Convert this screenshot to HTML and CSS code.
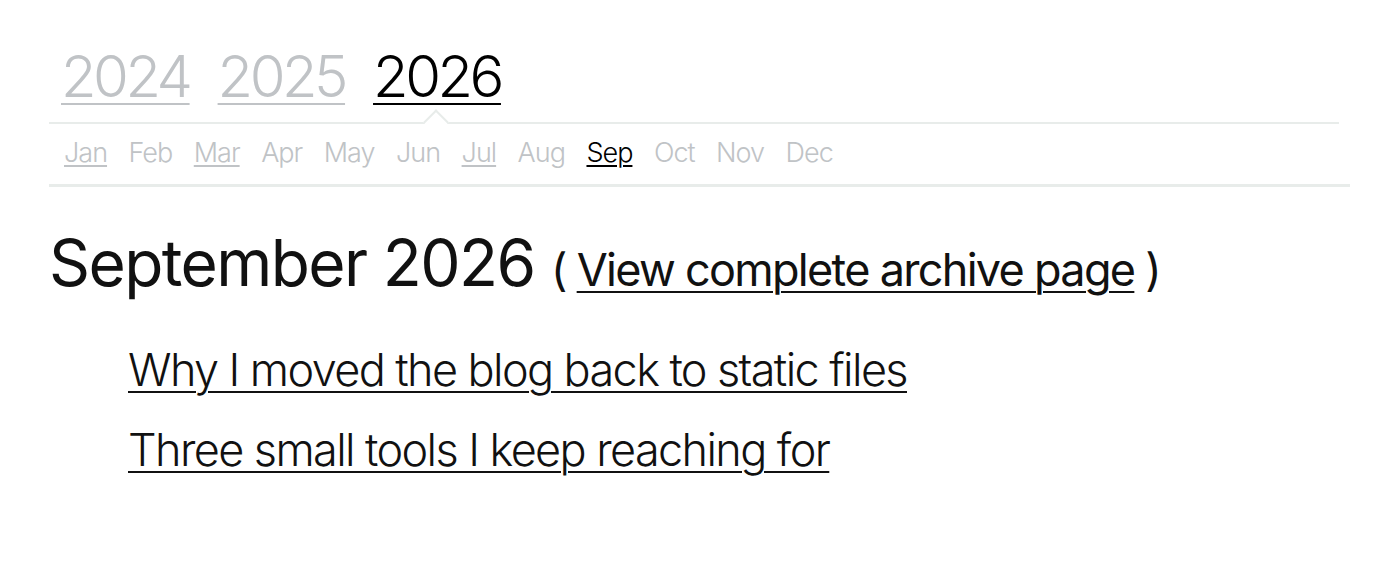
FILE: index.html
```html
<!DOCTYPE html>
<html lang="en">
<head>
<meta charset="utf-8">
<title>Archive</title>
<link rel="stylesheet" href="styles.css">
</head>
<body>
<div class="page">
  <nav class="archive-nav">
    <div class="years">
      <a class="year" href="#">2024</a>
      <a class="year" href="#">2025</a>
      <a class="year current" href="#">2026</a>
    </div>
    <div class="months">
      <a class="month link" href="#">Jan</a>
      <span class="month">Feb</span>
      <a class="month link" href="#">Mar</a>
      <span class="month">Apr</span>
      <span class="month">May</span>
      <span class="month">Jun</span>
      <a class="month link" href="#">Jul</a>
      <span class="month">Aug</span>
      <a class="month current" href="#">Sep</a>
      <span class="month">Oct</span>
      <span class="month">Nov</span>
      <span class="month">Dec</span>
    </div>
  </nav>
  <h1 class="title">September 2026 <span class="paren">( <a href="#">View complete archive page</a> )</span></h1>
  <ul class="posts">
    <li><a href="#">Why I moved the blog back to static files</a></li>
    <li><a href="#">Three small tools I keep reaching for</a></li>
  </ul>
</div>
</body>
</html>
```

FILE: styles.css
```css
html, body {
  margin: 0;
  padding: 0;
  background: #fff;
}
body {
  font-family: Inter, "Noto Sans", sans-serif;
  color: #111;
}
.page {
  padding: 40px 0 0 49px;
  width: 1301px;
}
.archive-nav {
  border-bottom: 3px solid #e8ecea;
}
.years {
  display: flex;
  gap: 28px;
  padding: 0 0 10px 12px;
  width: 1278px;
  border-bottom: 2px solid #e8ecea;
}
.year {
  position: relative;
  font-size: 58px;
  font-weight: 300;
  letter-spacing: -3.5px;
  line-height: 72px;
  color: #c0c3c6;
  text-decoration: underline;
  text-decoration-thickness: 2px;
  text-underline-offset: 6px;
}
.year.current {
  color: #000;
}
.year.current::after {
  content: "";
  position: absolute;
  left: 50%;
  bottom: -19px;
  width: 16px;
  height: 16px;
  margin-left: -10px;
  background: #fff;
  border-left: 2px solid #e8ecea;
  border-top: 2px solid #e8ecea;
  transform: rotate(45deg);
}
.months {
  display: flex;
  gap: 21.5px;
  padding: 10px 0 12px 15px;
}
.month {
  font-size: 27px;
  font-weight: 300;
  letter-spacing: -1px;
  line-height: 38px;
  color: #c0c3c6;
  text-decoration: none;
}
.month.link {
  text-decoration: underline;
  text-decoration-thickness: 2px;
  text-underline-offset: 3px;
}
.month.current {
  color: #000;
  text-decoration: underline;
  text-decoration-thickness: 2px;
  text-underline-offset: 3px;
}
.title {
  margin: 36px 0 0 0;
  font-size: 64px;
  font-weight: 400;
  letter-spacing: -1.6px;
  line-height: 80px;
}
.paren {
  font-size: 45px;
  letter-spacing: -1.7px;
}
.paren a, .posts a {
  color: #111;
  text-decoration: underline;
  text-decoration-thickness: 2px;
  text-underline-offset: 5px;
}
.posts {
  list-style: none;
  margin: 20px 0 0 0;
  padding: 0 0 0 79px;
}
.posts li {
  font-size: 45px;
  font-weight: 300;
  letter-spacing: -1.6px;
  line-height: 80px;
}
```
